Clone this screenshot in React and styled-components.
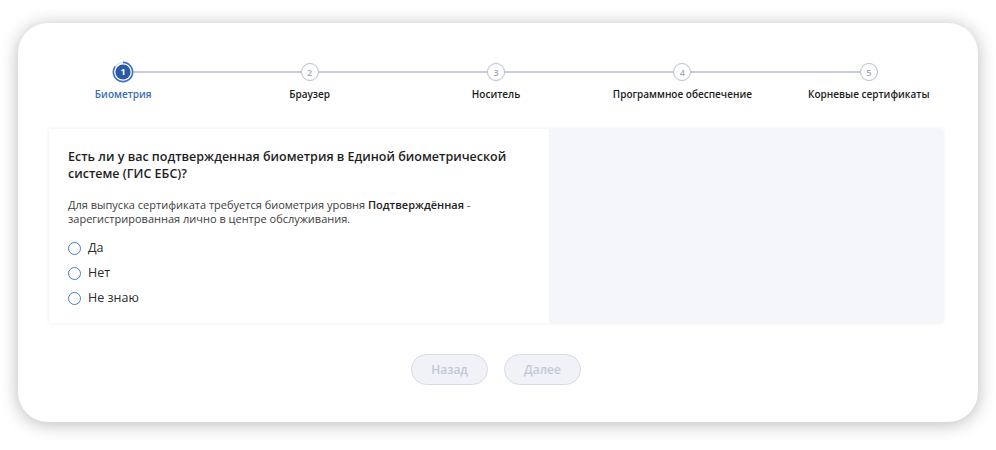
import React from "react";
import styled, { createGlobalStyle } from "styled-components";

const Global = createGlobalStyle`
  html, body { margin: 0; padding: 0; background: #fff; }
  body { font-family: "Open Sans", "Noto Sans", sans-serif; }
`;

const Page = styled.div`
  padding: 23px 18px 28px 18px;
`;

const Card = styled.div`
  width: 960px;
  height: 399px;
  box-sizing: border-box;
  background: #fff;
  border-radius: 30px;
  box-shadow: 0 2px 18px rgba(0, 0, 0, 0.28);
  padding: 38px 35px 0 31px;
  display: flex;
  flex-direction: column;
`;

const Stepper = styled.div`
  display: grid;
  grid-template-columns: repeat(5, 1fr);
  margin: 0 -19px 0 -19px;
`;

const Step = styled.div`
  position: relative;
  display: flex;
  flex-direction: column;
  align-items: center;
`;

const Connector = styled.div`
  position: absolute;
  top: 10px;
  left: 50%;
  width: 100%;
  height: 2px;
  background: #c9ccdb;
`;

const Dot = styled.div`
  position: relative;
  z-index: 1;
  width: 22px;
  height: 22px;
  display: flex;
  align-items: center;
  justify-content: center;
`;

const Num = styled.div`
  width: 18px;
  height: 18px;
  border-radius: 50%;
  box-sizing: border-box;
  border: 1px solid #b9bdd0;
  background: #fff;
  color: #a3a8ba;
  font-size: 9px;
  font-weight: 600;
  display: flex;
  align-items: center;
  justify-content: center;
`;

const StepLabel = styled.div`
  margin-top: 4px;
  font-size: 10px;
  font-weight: 600;
  color: ${(p) => (p.$active ? "#3a6bb3" : "#1c1c1c")};
  white-space: nowrap;
`;

const Panel = styled.div`
  margin-top: 28px;
  height: 194px;
  display: grid;
  grid-template-columns: 500px 1fr;
  box-shadow: 0 0 4px rgba(0, 0, 0, 0.08);
  background: #fff;
`;

const Left = styled.div`
  padding: 19px 19px 0 19px;
`;

const Right = styled.div`
  background: #f5f6fa;
`;

const Title = styled.div`
  font-size: 12.5px;
  font-weight: 600;
  line-height: 17px;
  color: #1e1e1e;
`;

const Text = styled.div`
  margin-top: 16px;
  font-size: 11px;
  line-height: 14px;
  color: #3c3c3c;
  b { font-weight: 600; color: #1e1e1e; }
`;

const Options = styled.div`
  margin-top: 14px;
  display: flex;
  flex-direction: column;
  gap: 9px;
`;

const Option = styled.label`
  display: flex;
  align-items: center;
  gap: 7px;
  font-size: 12.5px;
  line-height: 16px;
  color: #2a2a2a;
`;

const Radio = styled.span`
  width: 13px;
  height: 13px;
  box-sizing: border-box;
  border-radius: 50%;
  border: 1.3px solid #4a7cc4;
  background: #fff;
`;

const Actions = styled.div`
  margin-top: 31px;
  display: flex;
  justify-content: center;
  gap: 16px;
`;

const Button = styled.button`
  width: 77px;
  height: 31px;
  border-radius: 16px;
  border: 1px solid #d6dbe6;
  background: #f0f2f8;
  color: #c1c8d8;
  font-family: "Open Sans", sans-serif;
  font-size: 12px;
  font-weight: 600;
`;

const steps = ["Биометрия", "Браузер", "Носитель", "Программное обеспечение", "Корневые сертификаты"];

function ActiveDot() {
  return (
    <svg width="22" height="22" viewBox="0 0 22 22">
      <circle cx="11" cy="11" r="10" fill="#fff" />
      <circle cx="11" cy="11" r="9.6" fill="none" stroke="#dbe4f3" strokeWidth="1.4" />
      <path d="M11 1.4 A9.6 9.6 0 1 1 3.2 5.4" fill="none" stroke="#3f72bf" strokeWidth="1.6" />
      <circle cx="11" cy="11" r="7.6" fill="#2b5aa5" />
      <text x="11" y="14.3" textAnchor="middle" fontSize="9" fontWeight="700" fill="#fff" fontFamily="Open Sans, sans-serif">1</text>
    </svg>
  );
}

export default function App() {
  return (
    <>
      <Global />
      <Page>
        <Card>
          <Stepper>
            {steps.map((s, i) => (
              <Step key={s}>
                {i < steps.length - 1 && <Connector />}
                <Dot>{i === 0 ? <ActiveDot /> : <Num>{i + 1}</Num>}</Dot>
                <StepLabel $active={i === 0}>{s}</StepLabel>
              </Step>
            ))}
          </Stepper>
          <Panel>
            <Left>
              <Title>Есть ли у вас подтвержденная биометрия в Единой биометрической системе (ГИС ЕБС)?</Title>
              <Text>
                Для выпуска сертификата требуется биометрия уровня <b>Подтверждённая</b> -<br />
                зарегистрированная лично в центре обслуживания.
              </Text>
              <Options>
                {["Да", "Нет", "Не знаю"].map((o) => (
                  <Option key={o}>
                    <Radio />
                    {o}
                  </Option>
                ))}
              </Options>
            </Left>
            <Right />
          </Panel>
          <Actions>
            <Button>Назад</Button>
            <Button>Далее</Button>
          </Actions>
        </Card>
      </Page>
    </>
  );
}
